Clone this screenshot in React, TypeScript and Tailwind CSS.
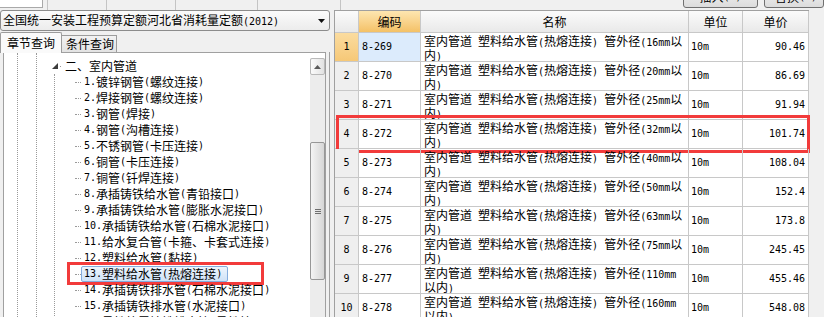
import React from "react";

const ASCII = /^[\x20-\x7e]+$/;

// ASCII runs in a fixed 6px-wide face, like the bitmap SimSun in the shot
function Txt({ text }: { text: string }) {
  const parts = text.split(/([\x20-\x7e]+)/).filter((p) => p !== "");
  return (
    <>
      {parts.map((p, i) =>
        ASCII.test(p) ? (
          <span key={i} className="whitespace-pre font-['DejaVu_Sans_Mono',monospace] text-[10px]">
            {p}
          </span>
        ) : (
          <span key={i}>{p}</span>
        )
      )}
    </>
  );
}

const treeItems = [
  "镀锌钢管(螺纹连接)",
  "焊接钢管(螺纹连接)",
  "钢管(焊接)",
  "钢管(沟槽连接)",
  "不锈钢管(卡压连接)",
  "铜管(卡压连接)",
  "铜管(钎焊连接)",
  "承插铸铁给水管(青铅接口)",
  "承插铸铁给水管(膨胀水泥接口)",
  "承插铸铁给水管(石棉水泥接口)",
  "给水复合管(卡箍、卡套式连接)",
  "塑料给水管(黏接)",
  "塑料给水管(热熔连接)",
  "承插铸铁排水管(石棉水泥接口)",
  "承插铸铁排水管(水泥接口)",
  "柔性抗震铸铁排水管(柔性接口)",
];

const rows = [
  { code: "8-269", d: "16mm以", tail: "内)", price: "90.46" },
  { code: "8-270", d: "20mm以", tail: "内)", price: "86.69" },
  { code: "8-271", d: "25mm以", tail: "内)", price: "91.94" },
  { code: "8-272", d: "32mm以", tail: "内)", price: "101.74" },
  { code: "8-273", d: "40mm以", tail: "内)", price: "108.04" },
  { code: "8-274", d: "50mm以", tail: "内)", price: "152.4" },
  { code: "8-275", d: "63mm以", tail: "内)", price: "173.8" },
  { code: "8-276", d: "75mm以", tail: "内)", price: "245.45" },
  { code: "8-277", d: "110mm", tail: "以内)", price: "455.46" },
  { code: "8-278", d: "160mm", tail: "以内)", price: "548.08" },
];

const cols = "grid grid-cols-[24px_62px_268px_54px_66px]";

function TopStrip() {
  return (
    <div className="flex h-[10px] shrink-0 overflow-hidden">
      <div className="h-[8px] w-[43px] border-r border-b border-[#a9a9a9] bg-white" />
      <div className="w-[4px]" />
      <div className="w-[59px] border-l border-[#c4c4c4]" />
      <div className="w-[69px] border-l border-[#c4c4c4]" />
      <div className="w-[82px] border-l border-[#c4c4c4]" />
      <div className="w-[83px] border-l border-[#c4c4c4]" />
      <div className="w-[1px] border-l border-[#c4c4c4]" />
      <div className="flex-1" />
      <div className="mt-[-14px] flex h-[22px] w-[75px] items-center justify-center rounded-[3px] border border-[#707070] bg-gradient-to-b from-[#f4f4f4] to-[#dcdcdc]">
        <Txt text="插入(I)" />
      </div>
      <div className="w-[6px]" />
      <div className="mt-[-14px] flex h-[22px] w-[60px] items-center rounded-[3px] border border-[#707070] bg-gradient-to-b from-[#f4f4f4] to-[#dcdcdc] pl-[10px]">
        <Txt text="替换(R)" />
      </div>
    </div>
  );
}

function TreeRow({ n, label, selected }: { n: number; label: string; selected: boolean }) {
  return (
    <div className="relative flex h-[16px] items-center">
      <span className="w-[20px] shrink-0" />
      <span className="w-[6px] shrink-0 border-t border-dotted border-[#9a9a9a]" />
      <span
        className={`flex h-[16px] items-center whitespace-nowrap border pl-[2px] pr-[5px] ${
          selected
            ? "rounded-[2px] border-[#84acdd] bg-gradient-to-b from-[#eef5fd] to-[#cfe2f7]"
            : "border-transparent"
        }`}
      >
        <Txt text={`${n}.${label}`} />
      </span>
      {selected && (
        <div className="pointer-events-none absolute left-[12px] top-[-4px] h-[23px] w-[197px] border-[3px] border-[#f23b3b]" />
      )}
    </div>
  );
}

function Scrollbar() {
  return (
    <div className="mt-[5px] flex w-[15px] shrink-0 flex-col bg-[#ececec]">
      <div className="flex h-[17px] items-center justify-center rounded-[2px] border border-[#b9b9b9] bg-gradient-to-r from-[#fbfbfb] to-[#e2e2e2]">
        <svg width="7" height="4" viewBox="0 0 7 4">
          <polygon points="3.5,0 7,4 0,4" fill="#5a5a5a" />
        </svg>
      </div>
      <div className="h-[67px]" />
      <div className="flex h-[138px] flex-col items-center justify-center gap-[1px] rounded-[2px] border border-[#979797] bg-gradient-to-r from-[#f4f4f4] to-[#d6d6d6]">
        <div className="h-[1px] w-[6px] bg-[#6f6f6f]" />
        <div className="h-[1px] w-[6px] bg-[#6f6f6f]" />
        <div className="h-[1px] w-[6px] bg-[#6f6f6f]" />
      </div>
    </div>
  );
}

function LeftPanel() {
  return (
    <div className="flex w-[330px] shrink-0 flex-col">
      <div className="flex h-[21px] shrink-0 items-center justify-between rounded-[3px] border border-[#8c8c8c] bg-gradient-to-b from-[#fbfbfb] to-[#ececec] pl-[2px] pr-[4px]">
        <span className="whitespace-nowrap">
          <Txt text="全国统一安装工程预算定额河北省消耗量定额(2012)" />
        </span>
        <svg width="7" height="4" viewBox="0 0 7 4">
          <polygon points="0,0 7,0 3.5,4" fill="#111" />
        </svg>
      </div>
      <div className="flex h-[21px] shrink-0 items-end">
        <div className="relative z-10 mb-[-1px] flex h-[21px] w-[62px] items-center rounded-t-[2px] border-x border-t border-[#9c9c9c] bg-[#fafafa] pb-[1px] pl-[6px]">
          章节查询
        </div>
        <div className="flex h-[17px] w-[55px] items-center border-t border-r border-[#9c9c9c] bg-gradient-to-b from-[#f2f2f2] to-[#e3e3e3] pl-[4px]">
          条件查询
        </div>
      </div>
      <div className="flex min-h-0 flex-1">
        <div className="w-[3px]" />
        <div className="flex h-[290px] w-[323px] border border-[#a0a0a0] bg-white">
          <div className="flex min-w-0 flex-1 overflow-hidden">
            <div className="w-[13px] shrink-0" />
            <div className="w-[19px] shrink-0 border-l border-dotted border-[#9a9a9a]" />
            <div className="w-[19px] shrink-0 border-l border-dotted border-[#9a9a9a]" />
            <div className="flex flex-1 flex-col pt-[5px] leading-[16px]">
              <div className="flex h-[16px] items-center">
                <svg className="ml-[-3px]" width="6" height="6" viewBox="0 0 6 6">
                  <polygon points="6,0 6,6 0,6" fill="#3c3c3c" />
                </svg>
                <span className="ml-[2px] h-[1px] w-[1px] bg-[#9a9a9a]" />
                <span className="ml-[4px] whitespace-nowrap">二、室内管道</span>
              </div>
              <div className="ml-[-1px] flex flex-col border-l border-dotted border-[#9a9a9a]">
                {treeItems.map((t, i) => (
                  <TreeRow key={i} n={i + 1} label={t} selected={i === 12} />
                ))}
              </div>
            </div>
          </div>
          <Scrollbar />
        </div>
        <div className="w-[3px]" />
        <div className="w-[1px] bg-[#a0a0a0]" />
      </div>
    </div>
  );
}

function Grid() {
  const line = "border-r border-b border-[#c8c8c8]";
  return (
    <div className="flex flex-col self-start border-l border-t border-[#a0a0a0] bg-white">
      <div className={`${cols} h-[22px]`}>
        <div className={`${line} bg-gradient-to-b from-[#fbfbfb] to-[#e9e9e9]`} />
        <div className={`${line} flex items-center justify-center bg-gradient-to-b from-[#fde6b0] to-[#f4c166]`}>编码</div>
        <div className={`${line} flex items-center justify-center bg-gradient-to-b from-[#fbfbfb] to-[#e9e9e9]`}>名称</div>
        <div className={`${line} flex items-center justify-center bg-gradient-to-b from-[#fbfbfb] to-[#e9e9e9]`}>单位</div>
        <div className={`${line} flex items-center justify-center bg-gradient-to-b from-[#fbfbfb] to-[#e9e9e9]`}>单价</div>
      </div>
      {rows.map((r, i) => (
        <div key={r.code} className={`${cols} relative h-[29px]`}>
          <div
            className={`${line} flex items-center justify-center font-['DejaVu_Sans_Mono',monospace] text-[10px] ${
              i === 0 ? "bg-gradient-to-b from-[#fbdc9f] to-[#f6c877]" : "bg-[#efefef]"
            }`}
          >
            {i + 1}
          </div>
          <div
            className={`${line} flex items-center pl-[3px] font-['DejaVu_Sans_Mono',monospace] text-[10px] ${
              i === 0 ? "bg-[#dcebfc]" : ""
            }`}
          >
            {r.code}
          </div>
          <div className={`${line} overflow-hidden pl-[3px] pt-[2px] leading-[12px]`}>
            <div className="whitespace-nowrap">
              <Txt text={`室内管道 塑料给水管(热熔连接) 管外径(${r.d}`} />
            </div>
            <div className="whitespace-nowrap">
              <Txt text={r.tail} />
            </div>
          </div>
          <div className={`${line} flex items-center pl-[2px] font-['DejaVu_Sans_Mono',monospace] text-[10px]`}>10m</div>
          <div className={`${line} flex items-center justify-end pr-[3px] font-['DejaVu_Sans_Mono',monospace] text-[10px]`}>
            {r.price}
          </div>
          {i === 3 && (
            <div className="pointer-events-none absolute left-[1px] top-[-5px] h-[38px] w-[474px] border-[3px] border-[#f23b3b]" />
          )}
        </div>
      ))}
    </div>
  );
}

export default function App() {
  return (
    <div className="flex h-[317px] w-[824px] flex-col overflow-hidden bg-[#f0f0f0] font-['Noto_Sans_CJK_SC',sans-serif] text-[12px] leading-[14px] text-black">
      <TopStrip />
      <div className="flex min-h-0 flex-1">
        <LeftPanel />
        <div className="w-[4px] shrink-0" />
        <Grid />
      </div>
    </div>
  );
}
